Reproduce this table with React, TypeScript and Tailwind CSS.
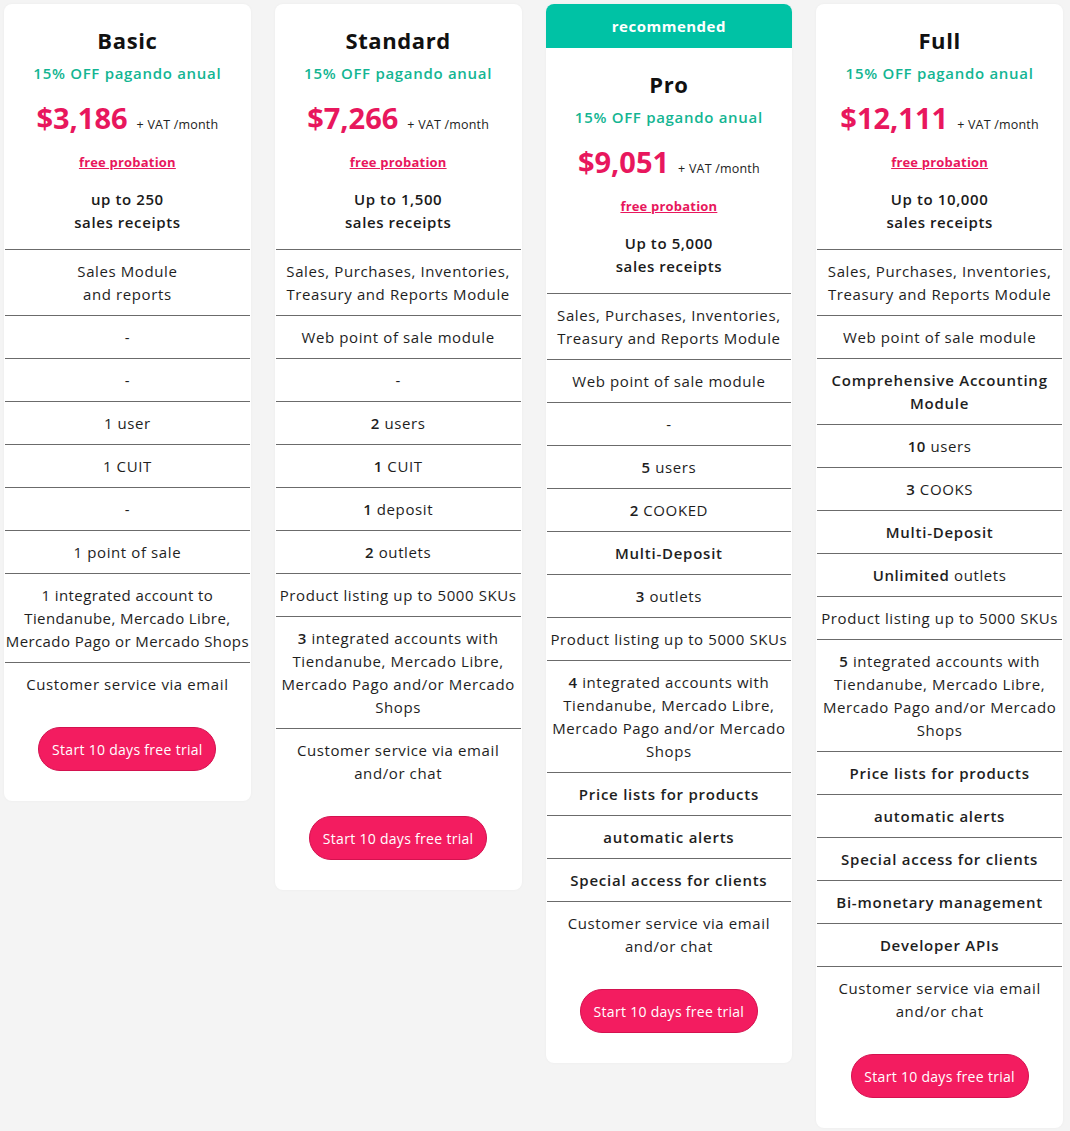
import React from "react";

type Seg = string | { b: string };
type Plan = {
  name: string;
  price: string;
  receipts: [string, string];
  rows: { segs: Seg[]; bold?: boolean; tight?: boolean }[];
  recommended?: boolean;
};

const plans: Plan[] = [
  {
    name: "Basic",
    price: "$3,186",
    receipts: ["up to 250", "sales receipts"],
    rows: [
      { segs: ["Sales Module", "\n", "and reports"] },
      { segs: ["-"] },
      { segs: ["-"] },
      { segs: ["1 user"] },
      { segs: ["1 CUIT"] },
      { segs: ["-"] },
      { segs: ["1 point of sale"] },
      {
        segs: ["1 integrated account to\nTiendanube, Mercado Libre,\nMercado Pago or Mercado Shops"],
        tight: true,
      },
      { segs: ["Customer service via email"] },
    ],
  },
  {
    name: "Standard",
    price: "$7,266",
    receipts: ["Up to 1,500", "sales receipts"],
    rows: [
      { segs: ["Sales, Purchases, Inventories, Treasury and Reports Module"] },
      { segs: ["Web point of sale module"] },
      { segs: ["-"] },
      { segs: [{ b: "2" }, " users"] },
      { segs: [{ b: "1" }, " CUIT"] },
      { segs: [{ b: "1" }, " deposit"] },
      { segs: [{ b: "2" }, " outlets"] },
      { segs: ["Product listing up to 5000 SKUs"] },
      { segs: [{ b: "3" }, " integrated accounts with Tiendanube, Mercado Libre, Mercado Pago and/or Mercado Shops"] },
      { segs: ["Customer service via email and/or chat"] },
    ],
  },
  {
    name: "Pro",
    price: "$9,051",
    receipts: ["Up to 5,000", "sales receipts"],
    recommended: true,
    rows: [
      { segs: ["Sales, Purchases, Inventories, Treasury and Reports Module"] },
      { segs: ["Web point of sale module"] },
      { segs: ["-"] },
      { segs: [{ b: "5" }, " users"] },
      { segs: [{ b: "2" }, " COOKED"] },
      { segs: ["Multi-Deposit"], bold: true },
      { segs: [{ b: "3" }, " outlets"] },
      { segs: ["Product listing up to 5000 SKUs"] },
      { segs: [{ b: "4" }, " integrated accounts with Tiendanube, Mercado Libre, Mercado Pago and/or Mercado Shops"] },
      { segs: ["Price lists for products"], bold: true },
      { segs: ["automatic alerts"], bold: true },
      { segs: ["Special access for clients"], bold: true },
      { segs: ["Customer service via email and/or chat"] },
    ],
  },
  {
    name: "Full",
    price: "$12,111",
    receipts: ["Up to 10,000", "sales receipts"],
    rows: [
      { segs: ["Sales, Purchases, Inventories, Treasury and Reports Module"] },
      { segs: ["Web point of sale module"] },
      { segs: ["Comprehensive Accounting Module"], bold: true },
      { segs: [{ b: "10" }, " users"] },
      { segs: [{ b: "3" }, " COOKS"] },
      { segs: ["Multi-Deposit"], bold: true },
      { segs: [{ b: "Unlimited" }, " outlets"] },
      { segs: ["Product listing up to 5000 SKUs"] },
      { segs: [{ b: "5" }, " integrated accounts with Tiendanube, Mercado Libre, Mercado Pago and/or Mercado Shops"] },
      { segs: ["Price lists for products"], bold: true },
      { segs: ["automatic alerts"], bold: true },
      { segs: ["Special access for clients"], bold: true },
      { segs: ["Bi-monetary management"], bold: true },
      { segs: ["Developer APIs"], bold: true },
      { segs: ["Customer service via email and/or chat"] },
    ],
  },
];

function PlanCard({ plan }: { plan: Plan }) {
  return (
    <div className="bg-white rounded-lg overflow-hidden shadow-[0_0_3px_rgba(0,0,0,0.04)] flex flex-col">
      {plan.recommended && (
        <div className="h-[44px] bg-[#00c2a5] flex items-center justify-center text-white text-[15px] font-bold tracking-[0.5px]">
          recommended
        </div>
      )}
      <div className="flex flex-col items-center pt-[22px] pb-[15px]">
        <h3 className="text-[22px] leading-[28px] font-bold tracking-[0.6px] text-[#111]">{plan.name}</h3>
        <p className="mt-[8px] text-[15px] leading-[22px] font-semibold tracking-[0.7px] text-[#13b592]">
          15% OFF pagando anual
        </p>
        <div className="mt-[16px] flex items-baseline gap-[9px]">
          <span className="text-[29px] leading-[36px] font-bold text-[#e8175d]">{plan.price}</span>
          <span className="text-[12.5px] tracking-[0.2px] text-[#222]">+ VAT /month</span>
        </div>
        <a href="#" className="mt-[16px] text-[13px] leading-[20px] font-bold tracking-[0.2px] text-[#e8175d] underline">
          free probation
        </a>
        <p className="mt-[16px] text-[15px] leading-[23px] font-semibold tracking-[0.6px] text-[#1a1a1a] text-center">
          {plan.receipts[0]}
          <br />
          {plan.receipts[1]}
        </p>
      </div>
      {plan.rows.map((row, i) => (
        <div
          key={i}
          className={`border-t border-[#6b6b6b] mx-[1px] pt-[10px] pb-[9px] text-center text-[15px] leading-[23px] text-[#1e1e1e] whitespace-pre-line ${
            row.tight ? "px-0 tracking-[0.4px] whitespace-pre" : "px-[2px] tracking-[0.6px]"
          } ${row.bold ? "font-semibold tracking-[0.75px]" : ""}`}
        >
          {row.segs.map((s, j) =>
            typeof s === "string" ? (
              <React.Fragment key={j}>{s}</React.Fragment>
            ) : (
              <span key={j} className="font-semibold">
                {s.b}
              </span>
            )
          )}
        </div>
      ))}
      <div className="flex justify-center pt-[22px] pb-[30px]">
        <button className="h-[44px] w-[178px] rounded-full bg-[#f31c60] border border-[#d3124f] text-white text-[14px] tracking-[0.3px]">
          Start 10 days free trial
        </button>
      </div>
    </div>
  );
}

export default function App() {
  return (
    <div
      className="min-h-[1131px] bg-[#f4f4f4] pl-[4px] pt-[4px]"
      style={{ fontFamily: '"Open Sans", "Liberation Sans", sans-serif' }}
    >
      <div className="grid grid-cols-4 gap-x-[24px] w-[1059px] items-start">
        {plans.map((p) => (
          <PlanCard key={p.name} plan={p} />
        ))}
      </div>
    </div>
  );
}
